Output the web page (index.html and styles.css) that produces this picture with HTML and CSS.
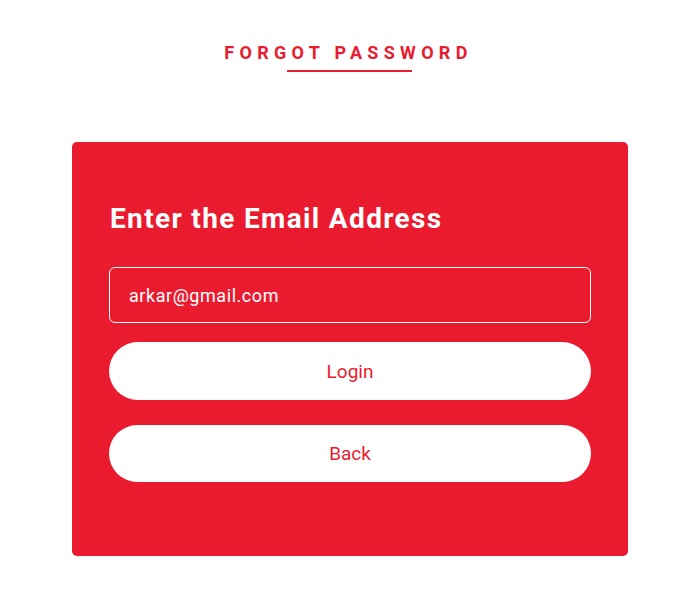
FILE: index.html
```html
<!DOCTYPE html>
<html>
<head>
<meta charset="utf-8">
<link rel="stylesheet" href="styles.css">
</head>
<body>
<div class="page">
  <div class="title-wrap">
    <h1 class="title">FORGOT PASSWORD</h1>
    <div class="underline"></div>
  </div>
  <div class="card">
    <h2 class="heading">Enter the Email Address</h2>
    <div class="input">arkar@gmail.com</div>
    <button class="btn btn-login">Login</button>
    <button class="btn btn-back">Back</button>
  </div>
</div>
</body>
</html>
```
FILE: styles.css
```css
* { box-sizing: border-box; }
html, body { margin: 0; padding: 0; background: #fff; }
body { font-family: Roboto, "Liberation Sans", sans-serif; }
.page {
  width: 683px;
  height: 615px;
  padding-top: 41px;
  display: flex;
  flex-direction: column;
  align-items: center;
}
.title-wrap {
  display: flex;
  flex-direction: column;
  align-items: center;
  margin-left: 14px;
}
.title {
  margin: 0;
  font-size: 18px;
  line-height: 24px;
  font-weight: 700;
  letter-spacing: 5.3px;
  color: #e91b2f;
}
.underline {
  width: 125px;
  height: 2px;
  background: #e91b2f;
  margin-top: 5px;
  margin-left: 2px;
}
.card {
  margin-top: 70px;
  width: 556px;
  height: 414px;
  background: #ea1b2f;
  border-radius: 5px;
  padding: 59px 37px 0 37px;
  display: flex;
  flex-direction: column;
  margin-left: 17px;
}
.heading {
  margin: 0 0 0 1px;
  color: #fff;
  font-size: 28px;
  line-height: 36px;
  font-weight: 700;
  letter-spacing: 1.35px;
}
.input {
  margin-top: 30px;
  height: 56px;
  border: 1px solid #fff;
  border-radius: 6px;
  color: #fff;
  font-size: 18px;
  letter-spacing: 0.55px;
  padding-left: 19px;
  display: flex;
  align-items: center;
}
.btn {
  border: none;
  background: #fff;
  color: #e91b2f;
  font-family: Roboto, "Liberation Sans", sans-serif;
  font-size: 19px;
  border-radius: 29px;
  height: 58px;
  width: 100%;
  padding: 0;
}
.btn-login { margin-top: 19px; }
.btn-back { margin-top: 25px; height: 57px; }
```
